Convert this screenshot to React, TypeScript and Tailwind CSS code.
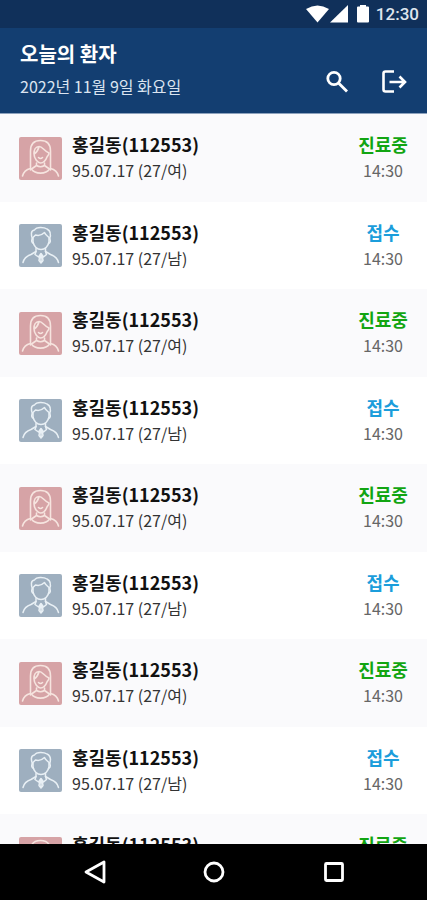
interface Patient {
  id: number
  name: string
  chartNo: string
  birth: string
  age: number
  gender: '여' | '남'
  status: '진료중' | '접수'
  time: string
}

const patients: Patient[] = Array.from({ length: 9 }, (_, i) => ({
  id: i + 1,
  name: '홍길동',
  chartNo: '112553',
  birth: '95.07.17',
  age: 27,
  gender: i % 2 === 0 ? '여' : '남',
  status: i % 2 === 0 ? '진료중' : '접수',
  time: '14:30',
}))

function FemaleAvatar() {
  return (
    <svg viewBox="0 0 43 43" className="size-[43px] shrink-0 rounded-xs bg-[#d6a3a6]" fill="none" stroke="#f6e4df" strokeWidth="1.6" strokeLinecap="round" strokeLinejoin="round" aria-hidden="true">
      <path d="M11.5 33V14C11.5 7 15.5 3.500 21.500 3.500S31.500 7 31.500 14V33" />
      <path d="M15.500 17C18 15 19.500 12 20 9.500C23 9 25 14 30 16C30 18 28.500 19 28 20C26.500 24 24 26 21.500 26S15 22 15 16.500C15 13 16.500 9.500 20 9.500" />
      <path d="M19.500 20.500Q21.500 22.500 23.500 20.500" />
      <path d="M11.500 31.500C7 32.500 4.500 35 3.500 39M31.500 31.500C36 32.500 38.500 35 39.500 39" />
      <path d="M17.500 26V28.500L12.500 32C16 37.500 27 37.500 30.500 32L25.500 28.500V26M17.500 28.500Q21.500 31 25.500 28.500" />
    </svg>
  )
}

function MaleAvatar() {
  return (
    <svg viewBox="0 0 43 43" className="size-[43px] shrink-0 rounded-xs bg-[#9eafbf]" fill="none" stroke="#e9f0f5" strokeWidth="1.5" strokeLinecap="round" strokeLinejoin="round" aria-hidden="true">
      <path d="M13.500 15C12 11 11.500 6.500 15.500 6C17.500 2.500 25 3 28 5C32 7 32 11 30.500 15" />
      <path d="M14 17.500V13.500L16.500 11C20 12 23.500 10.500 25.500 8.500C26 10.500 28.500 12 30 13.500V17.500C29.500 22 26 25.500 22 25.500S14.500 22 14 17.500Z" />
      <path d="M13.500 14Q11.500 18 14.500 19.500M30.500 14Q32.500 18 29.500 19.500" />
      <path d="M17 24.500V27.500L12 30.500C7.500 32 5 34 4 38.500M26.500 24.500V27.500L31.500 30.500C36 32 38.500 34 39.500 38.500" />
      <path d="M17 27.500L16 30.500L19.500 33L22 29.500L24.500 33L27.500 30.500L26.500 27.500M21 31L20 36.500L22 39L24 36.500L23 31M22 31V37" />
    </svg>
  )
}

function StatusBar() {
  return (
    <div className="flex h-7 shrink-0 items-center justify-end bg-[#10305a] pr-2 text-white">
      <svg viewBox="0 0 64 18" className="mr-1.5 h-[18px] w-16" fill="currentColor" aria-hidden="true">
        <path d="M0 4Q11.500-3 23 4L11.500 17.500Z" />
        <path d="M24 17.500L42 0V17.500Z" />
        <path d="M54 0h6v1.500h2q1 0 1 1V16.500q0 1-1 1H52q-1 0-1-1V2.500q0-1 1-1h2Z" />
      </svg>
      <span className="font-['Roboto',sans-serif] text-[17px] leading-5 font-medium text-[#dfe5ee]">12:30</span>
    </div>
  )
}

function Header() {
  return (
    <header className="flex h-[86px] shrink-0 items-end justify-between border-b border-[#8da2bd] bg-[#133e71] px-5 pb-[13px] text-white">
      <div>
        <h1 className="text-[20px] leading-9 font-bold">오늘의 환자</h1>
        <p className="text-[16px] leading-7 text-[#dbe4f0]">2022년 11월 9일 화요일</p>
      </div>
      <div className="flex items-center gap-8 pb-1.5">
        <button type="button" aria-label="검색">
          <svg viewBox="0 0 24 24" className="size-6" fill="none" stroke="currentColor" strokeWidth="2.800" aria-hidden="true">
            <circle cx="9" cy="8.500" r="6.200" />
            <path d="M13.500 13L22 21.500" />
          </svg>
        </button>
        <button type="button" aria-label="로그아웃">
          <svg viewBox="0 0 26 24" className="h-6 w-[26px]" fill="none" stroke="currentColor" strokeWidth="2.600" aria-hidden="true">
            <path d="M13 1.500H4.500Q2.500 1.500 2.500 3.500V19.500Q2.500 21.500 4.500 21.500H13M8.500 12H24M18.500 6.500L24 12L18.500 17.500" />
          </svg>
        </button>
      </div>
    </header>
  )
}

function PatientRow({ patient }: { patient: Patient }) {
  return (
    <li className="flex h-[88px] items-center gap-[10px] pr-4 pl-[19px] odd:bg-[#fafafc] even:h-[87px]">
      {patient.gender === '여' ? <FemaleAvatar /> : <MaleAvatar />}
      <div className="flex-1">
        <p className="text-[18px] leading-[25px] font-bold text-[#111111]">
          {patient.name}({patient.chartNo})
        </p>
        <p className="text-[16px] leading-[27px] text-[#333333]">
          {patient.birth} ({patient.age}/{patient.gender})
        </p>
      </div>
      <div className="w-14 text-center">
        <p className={`text-[18px] leading-[25px] font-bold ${patient.status === '진료중' ? 'text-[#12a512]' : 'text-[#1b9ddb]'}`}>
          {patient.status}
        </p>
        <p className="text-[16px] leading-[27px] text-[#666666]">{patient.time}</p>
      </div>
    </li>
  )
}

function NavigationBar() {
  return (
    <nav className="flex h-14 shrink-0 items-center justify-center gap-24 bg-black text-white">
      <button type="button" aria-label="뒤로">
        <svg viewBox="0 0 24 24" className="size-6" fill="none" stroke="currentColor" strokeWidth="2.800" strokeLinejoin="round" aria-hidden="true">
          <path d="M22 2V22L4 12Z" />
        </svg>
      </button>
      <button type="button" aria-label="홈">
        <svg viewBox="0 0 24 24" className="size-6" fill="none" stroke="currentColor" strokeWidth="2.800" aria-hidden="true">
          <circle cx="12" cy="12" r="9" />
        </svg>
      </button>
      <button type="button" aria-label="최근 앱">
        <svg viewBox="0 0 24 24" className="size-6" fill="none" stroke="currentColor" strokeWidth="2.800" aria-hidden="true">
          <rect x="3.500" y="3.500" width="17" height="17" rx="1" />
        </svg>
      </button>
    </nav>
  )
}

export default function App() {
  return (
    <div className="flex h-screen flex-col bg-white font-['Noto_Sans_CJK_KR',sans-serif]">
      <StatusBar />
      <Header />
      <main className="min-h-0 flex-1 overflow-hidden">
        <ul>
          {patients.map(patient => (
            <PatientRow key={patient.id} patient={patient} />
          ))}
        </ul>
      </main>
      <NavigationBar />
    </div>
  )
}
